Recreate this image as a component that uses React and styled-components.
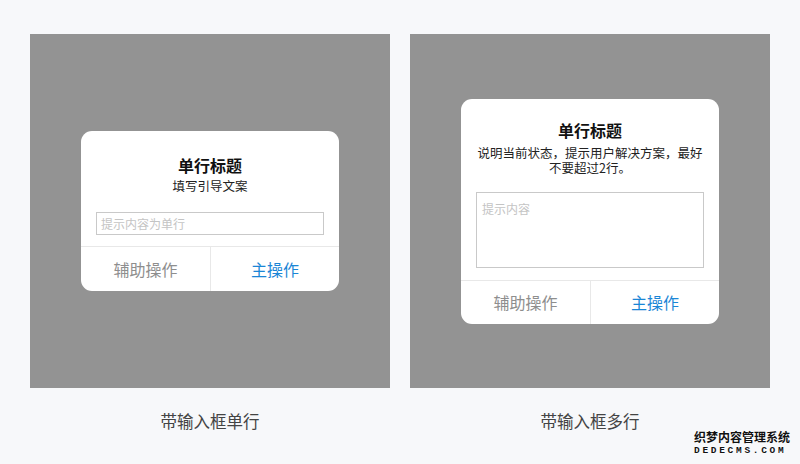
import React from 'react';
import styled, { createGlobalStyle } from 'styled-components';

const GlobalStyle = createGlobalStyle`
  body {
    margin: 0;
    background: #f7f8fa;
    font-family: "Noto Sans CJK SC", "Liberation Sans", sans-serif;
  }
`;

const Page = styled.div`
  position: relative;
  width: 800px;
  height: 464px;
  box-sizing: border-box;
  padding: 34px 30px 0;
  display: flex;
  gap: 20px;
`;

const Column = styled.div`
  width: 360px;
  display: flex;
  flex-direction: column;
  align-items: center;
`;

const Stage = styled.div`
  width: 360px;
  height: 354px;
  background: #939393;
  display: flex;
  align-items: center;
  justify-content: center;
`;

const Caption = styled.div`
  margin-top: 22px;
  font-size: 16.5px;
  line-height: 22px;
  color: #444444;
`;

const Dialog = styled.div`
  width: 258px;
  background: #ffffff;
  border-radius: 11px;
  overflow: hidden;
  display: flex;
  flex-direction: column;
  align-items: center;
  padding-top: ${(p) => p.$top}px;
`;

const Title = styled.div`
  font-size: 16px;
  line-height: 22px;
  font-weight: 700;
  color: #111111;
`;

const Text = styled.div`
  margin-top: ${(p) => p.$gap}px;
  padding: 0 15px;
  font-size: 12.5px;
  line-height: ${(p) => p.$lh}px;
  color: #222222;
  text-align: center;
`;

const Field = styled.div`
  margin-top: 17px;
  width: 228px;
  height: ${(p) => p.$h}px;
  box-sizing: border-box;
  border: 1px solid #c9c9c9;
  padding: ${(p) => (p.$multi ? '7px 5px' : '2px 4px')};
  font-size: 12px;
  line-height: 18px;
  color: #c4c4c4;
  text-align: left;
`;

const Actions = styled.div`
  margin-top: ${(p) => p.$gap}px;
  width: 100%;
  height: ${(p) => p.$h}px;
  border-top: 1px solid #e8e8e8;
  display: grid;
  grid-template-columns: 1fr 1fr;
`;

const ActionButton = styled.div`
  display: flex;
  align-items: center;
  justify-content: center;
  font-size: 16px;
  color: ${(p) => (p.$primary ? '#1b86d6' : '#8e8e8e')};
  & + & {
    border-left: 1px solid #e8e8e8;
  }
`;

const Watermark = styled.div`
  position: absolute;
  right: 10px;
  bottom: 8px;
  display: flex;
  flex-direction: column;
  align-items: flex-start;
  font-weight: 700;
  color: #111111;
  text-shadow: 0 0 2px #ffffff, 0 0 2px #ffffff;

  & > .cn {
    font-size: 12px;
    line-height: 15px;
  }

  & > .en {
    margin-top: 2px;
    font-family: "Liberation Mono", monospace;
    font-size: 9.5px;
    line-height: 10px;
    letter-spacing: 2.7px;
  }
`;

export default function App() {
  return (
    <>
      <GlobalStyle />
      <Page>
        <Column>
          <Stage>
            <Dialog $top={23}>
              <Title>单行标题</Title>
              <Text $gap={1} $lh={18}>填写引导文案</Text>
              <Field $h={23}>提示内容为单行</Field>
              <Actions $gap={11} $h={44}>
                <ActionButton>辅助操作</ActionButton>
                <ActionButton $primary>主操作</ActionButton>
              </Actions>
            </Dialog>
          </Stage>
          <Caption>带输入框单行</Caption>
        </Column>

        <Column>
          <Stage>
            <Dialog $top={20}>
              <Title>单行标题</Title>
              <Text $gap={4} $lh={15}>
                说明当前状态，提示用户解决方案，最好不要超过2行。
              </Text>
              <Field $h={76} $multi>提示内容</Field>
              <Actions $gap={12} $h={43}>
                <ActionButton>辅助操作</ActionButton>
                <ActionButton $primary>主操作</ActionButton>
              </Actions>
            </Dialog>
          </Stage>
          <Caption>带输入框多行</Caption>
        </Column>

        <Watermark>
          <span className="cn">织梦内容管理系统</span>
          <span className="en">DEDECMS.COM</span>
        </Watermark>
      </Page>
    </>
  );
}
